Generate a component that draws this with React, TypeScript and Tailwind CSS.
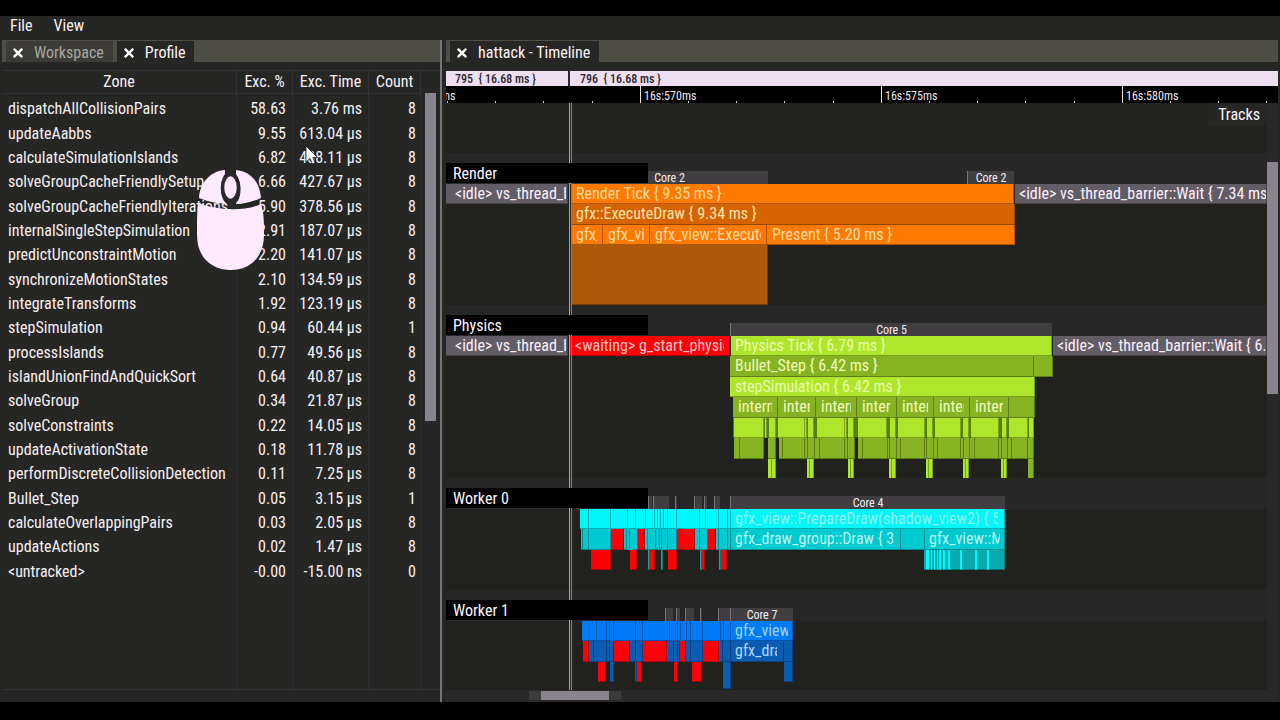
import type { ReactNode } from 'react';

interface Zone {
    name: string;
    percent: string;
    time: string;
    count: number;
}

interface Span {
    from: number;
    to: number;
    color: string;
    label?: string;
    text?: string;
    pad?: string;
    tall?: string;
}

interface Track {
    name: string;
    height: string;
    cores: { from: number; to: number; label?: string }[];
    rows: Span[][];
}

// Visible part of the timeline, in timeline units
const VIEW = 821;

const zones: Zone[] = [
    { name: 'dispatchAllCollisionPairs', percent: '58.63', time: '3.76 ms', count: 8 },
    { name: 'updateAabbs', percent: '9.55', time: '613.04 µs', count: 8 },
    { name: 'calculateSimulationIslands', percent: '6.82', time: '438.11 µs', count: 8 },
    { name: 'solveGroupCacheFriendlySetup', percent: '6.66', time: '427.67 µs', count: 8 },
    { name: 'solveGroupCacheFriendlyIterations', percent: '5.90', time: '378.56 µs', count: 8 },
    { name: 'internalSingleStepSimulation', percent: '2.91', time: '187.07 µs', count: 8 },
    { name: 'predictUnconstraintMotion', percent: '2.20', time: '141.07 µs', count: 8 },
    { name: 'synchronizeMotionStates', percent: '2.10', time: '134.59 µs', count: 8 },
    { name: 'integrateTransforms', percent: '1.92', time: '123.19 µs', count: 8 },
    { name: 'stepSimulation', percent: '0.94', time: '60.44 µs', count: 1 },
    { name: 'processIslands', percent: '0.77', time: '49.56 µs', count: 8 },
    { name: 'islandUnionFindAndQuickSort', percent: '0.64', time: '40.87 µs', count: 8 },
    { name: 'solveGroup', percent: '0.34', time: '21.87 µs', count: 8 },
    { name: 'solveConstraints', percent: '0.22', time: '14.05 µs', count: 8 },
    { name: 'updateActivationState', percent: '0.18', time: '11.78 µs', count: 8 },
    { name: 'performDiscreteCollisionDetection', percent: '0.11', time: '7.25 µs', count: 8 },
    { name: 'Bullet_Step', percent: '0.05', time: '3.15 µs', count: 1 },
    { name: 'calculateOverlappingPairs', percent: '0.03', time: '2.05 µs', count: 8 },
    { name: 'updateActions', percent: '0.02', time: '1.47 µs', count: 8 },
    { name: '<untracked>', percent: '-0.00', time: '-15.00 ns', count: 0 },
];

const IDLE = 'bg-[#625c64]';
const RED = 'bg-[#fe0008]';
const ORANGE = 'bg-[#ff7a00]';
const ORANGE_DIM = 'bg-[#d56400]';
const LIME = 'bg-[#aee62c]';
const LIME_DIM = 'bg-[#86b322]';
const CYAN = 'bg-[#00f8fc]';
const CYAN_DIM = 'bg-[#00cad1]';
const CYAN_DARK = 'bg-[#0aa9ae]';
const BLUE = 'bg-[#007bf8]';
const BLUE_DIM = 'bg-[#0c5cb4]';

// Splits a stretch of the timeline into neighbouring spans
const split = (color: string, edges: number[]): Span[] =>
    edges.slice(1).map((to, i) => ({ from: edges[i], to, color }));

const spans = (color: string, pairs: number[][]): Span[] =>
    pairs.map(([from, to]) => ({ from, to, color }));

const tracks: Track[] = [
    {
        name: 'Render',
        height: 'h-[121px]',
        cores: [
            { from: 124, to: 322, label: 'Core 2' },
            { from: 521, to: 568, label: 'Core 2' },
        ],
        rows: [
            [
                { from: 0, to: 122, color: IDLE, label: '<idle> vs_thread_barrier::Wait', text: 'text-[#fdf0fd]', pad: 'pl-[9px] pr-px' },
                { from: 125, to: 568, color: ORANGE, label: 'Render Tick { 9.35 ms }', text: 'text-[#ffd9a0]' },
                { from: 569, to: 821, color: IDLE, label: '<idle> vs_thread_barrier::Wait { 7.34 ms }', text: 'text-[#fdf0fd]', pad: 'pl-1' },
            ],
            [{ from: 125, to: 569, color: ORANGE_DIM, label: 'gfx::ExecuteDraw { 9.34 ms }', text: 'text-[#ffe2ae]' }],
            [
                { from: 125, to: 157, color: ORANGE, label: 'gfx_view', text: 'text-[#ffd9a0]' },
                { from: 157, to: 204, color: ORANGE, label: 'gfx_view', text: 'text-[#ffd9a0]' },
                { from: 204, to: 321, color: ORANGE, label: 'gfx_view::Execute', text: 'text-[#ffd9a0]' },
                { from: 321, to: 569, color: ORANGE, label: 'Present { 5.20 ms }', text: 'text-[#ffd9a0]' },
            ],
            [{ from: 126, to: 322, color: 'bg-[#ae580a]', tall: 'h-[61px] -mt-px' }],
        ],
    },
    {
        name: 'Physics',
        height: 'h-[142px]',
        cores: [{ from: 284, to: 606, label: 'Core 5' }],
        rows: [
            [
                { from: 0, to: 122, color: IDLE, label: '<idle> vs_thread_barrier::Wait', text: 'text-[#fdf0fd]', pad: 'pl-[9px] pr-px' },
                { from: 124, to: 284, color: RED, label: '<waiting> g_start_physics', text: 'text-[#ffc4c4]' },
                { from: 285, to: 606, color: LIME, label: 'Physics Tick { 6.79 ms }', text: 'text-[#e9ffae]', pad: 'pl-1' },
                { from: 607, to: 821, color: IDLE, label: '<idle> vs_thread_barrier::Wait { 6.34 ms }', text: 'text-[#fdf0fd]', pad: 'pl-1' },
            ],
            [
                { from: 284, to: 588, color: LIME_DIM, label: 'Bullet_Step { 6.42 ms }', text: 'text-[#efffbe]' },
                { from: 588, to: 607, color: LIME_DIM },
            ],
            [{ from: 284, to: 589, color: LIME, label: 'stepSimulation { 6.42 ms }', text: 'text-[#e9ffae]' }],
            [
                ...[287, 332, 370, 411, 451, 488, 524].map((from, i, all) => ({
                    from,
                    to: all[i + 1] ?? 563,
                    color: LIME_DIM,
                    label: 'internal',
                    text: 'text-[#efffbe]',
                })),
                { from: 563, to: 589, color: LIME_DIM },
            ],
            [
                { from: 287, to: 588, color: 'bg-[#56800f]' },
                ...spans(LIME, [
                    [288, 318], [319, 321], [323, 330], [332, 359], [359, 361], [362, 368], [371, 399], [399, 401],
                    [402, 408], [412, 441], [444, 450], [452, 479], [481, 487], [489, 515], [517, 523], [525, 553],
                    [556, 561], [563, 582], [583, 588],
                ]),
            ],
            [
                ...split(LIME_DIM, [288, 294, 318]),
                ...split(LIME_DIM, [322, 330]),
                ...split(LIME_DIM, [333, 337, 359, 362, 369, 374, 399, 402, 409]),
                ...split(LIME_DIM, [412, 417, 442, 444, 451, 455, 479, 481, 488, 492, 515, 518, 524, 529, 553, 556, 562, 566, 582, 588]),
            ],
            [
                ...spans(LIME, [
                    [322, 326], [326, 330], [361, 364], [364, 368], [402, 405], [405, 408], [443, 446], [446, 450],
                    [480, 483], [483, 487], [517, 520], [520, 523], [555, 558], [558, 561],
                ]),
                { from: 582, to: 588, color: LIME_DIM },
            ],
        ],
    },
    {
        name: 'Worker 0',
        height: 'h-[81px]',
        cores: [
            { from: 202, to: 206 },
            { from: 207, to: 223 },
            { from: 229, to: 231 },
            { from: 248, to: 256 },
            { from: 258, to: 261 },
            { from: 268, to: 274 },
            { from: 284, to: 559, label: 'Core 4' },
        ],
        rows: [
            [
                ...split(CYAN, [134, 143, 165, 182, 190, 200, 209, 212, 215, 218, 222, 231, 254, 260, 273, 282, 285]),
                { from: 285, to: 559, color: CYAN, label: 'gfx_view::PrepareDraw(shadow_view2) { 5.68 ms }', text: 'text-[#8ff5ee]', pad: 'pl-1 pr-1.5' },
            ],
            [
                ...split(CYAN_DIM, [135, 137, 143, 165]),
                ...split(RED, [165, 178]),
                ...split(CYAN_DIM, [178, 181, 184, 192]),
                ...split(RED, [192, 199]),
                ...split(CYAN_DIM, [199, 202, 210, 214, 216, 222, 231]),
                ...split(RED, [231, 249]),
                ...split(CYAN_DIM, [249, 254, 262]),
                ...split(RED, [262, 270]),
                ...split(CYAN_DIM, [270, 273, 282, 285]),
                { from: 285, to: 455, color: CYAN_DIM, label: 'gfx_draw_group::Draw { 3.52 ms }', text: 'text-[#b9fbf4]', pad: 'pl-1 pr-1.5' },
                { from: 455, to: 479, color: CYAN_DIM },
                { from: 479, to: 559, color: CYAN_DIM, label: 'gfx_view::Main', text: 'text-[#b9fbf4]', pad: 'pl-1 pr-1' },
            ],
            [
                ...spans(RED, [[145, 165], [184, 191], [204, 209], [222, 231], [256, 259], [275, 281]]),
                ...spans(CYAN_DARK, [[202, 204], [215, 217], [254, 256], [273, 275], [478, 559]]),
                ...spans(CYAN, [
                    [480, 484], [485, 487], [488, 490], [491, 493], [493, 496], [497, 500], [502, 505], [514, 517],
                    [529, 532], [541, 544],
                ]),
            ],
        ],
    },
    {
        name: 'Worker 1',
        height: 'h-[68px]',
        cores: [
            { from: 219, to: 227 },
            { from: 230, to: 234 },
            { from: 239, to: 248 },
            { from: 254, to: 256 },
            { from: 272, to: 284 },
            { from: 284, to: 347, label: 'Core 7' },
        ],
        rows: [
            [
                ...split(BLUE, [136, 151, 161, 164, 168, 190, 197, 224, 232, 235, 241, 245, 257, 275, 278, 285]),
                { from: 285, to: 347, color: BLUE, label: 'gfx_view::Pre', text: 'text-[#a5d3ff]', pad: 'pl-1 pr-1' },
            ],
            [
                ...split(RED, [137, 143]),
                ...split(BLUE_DIM, [143, 148, 161, 164, 168]),
                ...split(RED, [168, 184]),
                ...split(BLUE_DIM, [184, 190, 197]),
                ...split(RED, [197, 221]),
                ...split(BLUE_DIM, [221, 228, 232, 234]),
                ...split(RED, [234, 240]),
                ...split(BLUE_DIM, [240, 245, 257]),
                ...split(RED, [257, 273]),
                ...split(BLUE_DIM, [273, 277, 285]),
                { from: 285, to: 338, color: BLUE_DIM, label: 'gfx_draw', text: 'text-[#b4dbff]', pad: 'pl-1 pr-1.5' },
                { from: 338, to: 347, color: BLUE_DIM },
            ],
            [
                ...spans(RED, [[152, 160], [191, 196], [228, 232], [246, 256]]),
                ...spans(BLUE_DIM, [[164, 168], [189, 191], [338, 347]]),
                { from: 277, to: 285, color: BLUE_DIM, tall: 'h-[27px]' },
            ],
        ],
    },
];

const ticks = Array.from({ length: 18 }, (_, i) => i);

const place = (from: number, to: number) => ({
    left: `${(from / VIEW) * 100}%`,
    width: `${((to - from) / VIEW) * 100}%`,
});

const Tab = ({ title, active }: { title: string; active?: boolean }) => (
    <div className={`flex h-[21px] items-center gap-[11px] pl-[7px] pr-[9px] pt-0.5 ${active ? 'bg-[#262625] text-[#fdf5f5]' : 'bg-[#3c3b37] text-[#aaa7a1]'}`}>
        <button aria-label={`Close ${title}`}>
            <svg width="10" height="10" viewBox="0 0 10 10" stroke="#fff" strokeWidth="2.4">
                <path d="M0.8 0.8 L9.2 9.2 M9.2 0.8 L0.8 9.2" />
            </svg>
        </button>
        <span>{title}</span>
    </div>
);

const TabBar = ({ children }: { children: ReactNode }) => (
    <div className="flex h-[22px] shrink-0 items-end gap-1 bg-[#4e4d46] pl-1">{children}</div>
);

const EmptyCells = () => (
    <>
        <td className="border-r border-[#303030]" />
        <td className="border-r border-[#303030]" />
        <td className="border-r border-[#303030]" />
        <td className="border-r border-[#303030]" />
    </>
);

const ProfilePanel = () => (
    <section className="flex min-h-0 min-w-0 flex-col pl-0.5">
        <TabBar>
            <Tab title="Workspace" />
            <Tab title="Profile" active />
        </TabBar>
        <div className="mt-2 flex min-h-0 flex-1 gap-1 border-y border-[#343434] pr-1">
            <table className="h-full flex-1 table-fixed border-collapse whitespace-nowrap">
                <thead>
                    <tr className="h-[22px] border-b border-[#343434]">
                        <th className="border-r border-[#343434] font-normal">Zone</th>
                        <th className="w-14 border-r border-[#343434] font-normal">Exc. %</th>
                        <th className="w-[76px] border-r border-[#343434] font-normal">Exc. Time</th>
                        <th className="w-[52px] border-r border-[#343434] font-normal">Count</th>
                    </tr>
                </thead>
                <tbody>
                    <tr className="h-1">
                        <EmptyCells />
                    </tr>
                    {zones.map((zone) => (
                        <tr key={zone.name} className="h-6 nth-[3n]:h-[25px]">
                            <td className="border-r border-[#303030] pl-1.5">{zone.name}</td>
                            <td className="border-r border-[#303030] pr-1.5 text-right">{zone.percent}</td>
                            <td className="border-r border-[#303030] pr-1.5 text-right">{zone.time}</td>
                            <td className="border-r border-[#303030] pr-1 text-right">{zone.count}</td>
                        </tr>
                    ))}
                    <tr>
                        <EmptyCells />
                    </tr>
                </tbody>
            </table>
            <div className="w-[11px] pt-[22px]">
                <div className="h-[55%] bg-[#88838c]" />
            </div>
        </div>
    </section>
);

const TrackView = ({ track }: { track: Track }) => (
    <div>
        <div className="relative flex h-[31px] items-end bg-[#272727] pb-px">
            {track.cores.map((core) => (
                <div
                    key={core.from}
                    className="absolute bottom-0 h-[13px] border-l border-[#77747a] bg-[#403e40] text-center text-xs leading-[14px] text-[#f4eef4]"
                    style={place(core.from, core.to)}
                >
                    {core.label}
                </div>
            ))}
            <h2 className="relative z-20 h-5 w-[202px] bg-black pl-[7px] text-base leading-[22px] text-[#fdf5fd]">{track.name}</h2>
        </div>
        <div className={`bg-[#21211e] ${track.height}`}>
            {track.rows.map((row, i) => (
                <div key={i} className="relative odd:h-5 even:h-[21px]">
                    {row.map((span) => (
                        <div
                            key={`${span.from}-${span.color}`}
                            className={`absolute top-0 overflow-hidden border-b border-r border-black/30 leading-5 ${span.tall ?? 'h-full'} ${span.color}`}
                            style={place(span.from, span.to)}
                        >
                            {span.label && (
                                <div className={`${span.pad ?? 'px-[5px]'} ${span.text}`}>
                                    <div className="overflow-hidden whitespace-nowrap">{span.label}</div>
                                </div>
                            )}
                        </div>
                    ))}
                </div>
            ))}
        </div>
    </div>
);

const TimelinePanel = () => (
    <section className="flex min-h-0 min-w-0 flex-col border-l-2 border-[#77757a] pl-1 pr-0.5">
        <TabBar>
            <Tab title="hattack - Timeline" active />
        </TabBar>
        <div className="mt-[9px] h-[15px] shrink-0 bg-[#eddff0] pr-[11px] text-xs font-medium leading-4 text-[#2c2630]">
            <div className="relative h-full overflow-hidden whitespace-pre">
                <div className="absolute h-full border-r-2 border-[#2c2630] pl-[9px]" style={place(0, 124)}>795  {'{ 16.68 ms }'}</div>
                <div className="absolute h-full pl-2.5" style={place(124, 821)}>796  {'{ 16.68 ms }'}</div>
            </div>
        </div>
        <div className="h-[17px] shrink-0 bg-black pr-[11px]">
            <div className="relative h-full overflow-hidden text-xs leading-5 text-[#ece6ec]">
                {ticks.map((i) => (
                    <div key={i} className="absolute bottom-0 h-0.5 border-l border-[#d8d0d8]" style={place(1 + i * 48.2, 2 + i * 48.2)} />
                ))}
                {['16s:565ms', '16s:570ms', '16s:575ms', '16s:580ms'].map((label, i) => (
                    <div key={label} className="absolute h-full border-l border-[#e8e0e8] pl-[3px]" style={place(i * 241 - 47, i * 241 + 40)}>
                        {label}
                    </div>
                ))}
            </div>
        </div>
        <div className="flex min-h-0 flex-1">
            <div className="relative min-w-0 flex-1 overflow-hidden bg-[#21211e]">
                <div className="flex h-[50px] items-start justify-end">
                    <button className="relative z-20 h-[23px] bg-[#262625] pl-2.5 pr-[7px] leading-6 text-[#fdf5fd]">Tracks</button>
                </div>
                {tracks.map((track) => (
                    <TrackView key={track.name} track={track} />
                ))}
                <div className="absolute top-0 z-10 h-full border-l border-[#aaa6aa]" style={place(123, 124)} />
                <div className="absolute top-0 z-10 h-full border-l border-[#8a868a]" style={place(125, 126)} />
            </div>
            <div className="w-[11px] bg-[#292929] pt-[59px]">
                <div className="h-[44%] bg-[#88838c]" />
            </div>
        </div>
        <div className="flex h-3 shrink-0 items-start bg-[#292929] pl-[10%] pt-px">
            <div className="h-[9px] w-3 bg-[#3c3b3c]" />
            <div className="h-[9px] w-[9%] bg-[#88838c]" />
            <div className="h-[9px] w-3 bg-[#3c3b3c]" />
        </div>
    </section>
);

const MouseOverlay = () => (
    <>
        <svg className="pointer-events-none absolute left-[196px] top-[169px] z-30" width="69" height="102" viewBox="0 0 69 102" fill="#fdeafd">
            <path d="M29 1 C15 2 4 13 3 29 C10 32 18 34 30 35 L30 34 C24 29 23 13 29 5 Z" />
            <path d="M40 1 C54 2 64 13 65 29 C58 32 49 35 40 35 L40 34 C46 29 46 13 40 5 Z" />
            <path d="M2 34 C20 41 48 43 65 35 C68 44 68 53 68 66 C68 88 54 101 35 101 C15 101 1 88 1 66 C1 54 1 42 2 34 Z" />
            <path d="M34.500 30 L34.500 39" stroke="#2b292b" strokeWidth="5" />
            <ellipse cx="34.500" cy="18.500" rx="8" ry="13" stroke="#2b292b" strokeWidth="3.500" />
        </svg>
        <svg className="pointer-events-none absolute left-[305px] top-[145px] z-30" width="14" height="20" viewBox="0 0 14 20">
            <path d="M1 1 L1 17 L5 13.500 L7.500 19 L10 18 L7.800 12.500 L12.500 12.500 Z" fill="#fff7ff" stroke="#222" strokeWidth="0.800" />
        </svg>
    </>
);

const App = () => (
    <main className="relative flex h-screen flex-col overflow-hidden bg-black pb-[18px] pt-4 font-['Roboto_Condensed',Roboto,sans-serif] text-base leading-5 text-[#f6f0f2]">
        <nav className="flex h-6 shrink-0 items-center gap-[21px] bg-[#262625] pb-1 pl-2.5">
            <button>File</button>
            <button>View</button>
        </nav>
        <div className="grid min-h-0 flex-1 grid-cols-[11fr_21fr] bg-[#262625]">
            <div className="grid min-h-0 pb-3">
                <ProfilePanel />
            </div>
            <TimelinePanel />
        </div>
        <MouseOverlay />
    </main>
);

export default App;
